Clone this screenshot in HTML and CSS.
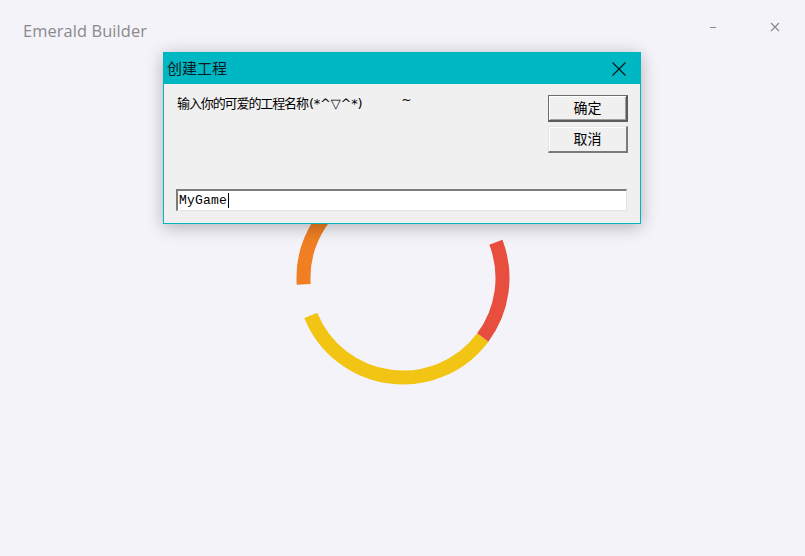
FILE: index.html
```html
<!DOCTYPE html>
<html lang="zh-CN">
<head>
<meta charset="utf-8">
<title>Emerald Builder</title>
<link rel="stylesheet" href="styles.css">
</head>
<body>
<div class="app">
  <header class="topbar">
    <div class="app-title">Emerald Builder</div>
    <div class="win-controls">
      <span class="win-btn min">
        <svg width="8" height="2" viewBox="0 0 8 2"><rect x="0" y="0" width="6" height="1" fill="#8a8a8a"/></svg>
      </span>
      <span class="win-btn close">
        <svg width="10" height="10" viewBox="0 0 10 10"><path d="M1 1 L9 9 M9 1 L1 9" stroke="#8a8a8a" stroke-width="1.2" fill="none"/></svg>
      </span>
    </div>
  </header>
  <main class="stage">
    <svg class="spinner" width="230" height="230" viewBox="0 0 230 230">
      <path d="M15.71 121.42 A99.5 99.5 0 0 1 80.97 21.50" stroke="#ef7f22" stroke-width="14" fill="none"/>
      <path d="M194.78 174.46 A99.5 99.5 0 0 1 22.75 152.27" stroke="#f2c413" stroke-width="14" fill="none"/>
      <path d="M207.89 79.34 A99.5 99.5 0 0 1 194.78 174.46" stroke="#e84e3e" stroke-width="14" fill="none"/>
    </svg>
  </main>

  <div class="dialog">
    <div class="dlg-titlebar">
      <span class="dlg-title">创建工程</span>
      <span class="dlg-close">
        <svg width="14" height="14" viewBox="0 0 14 14"><path d="M0.5 0.5 L13.5 13.5 M13.5 0.5 L0.5 13.5" stroke="#111" stroke-width="1.1" fill="none"/></svg>
      </span>
    </div>
    <div class="dlg-body">
      <div class="dlg-label"><span class="cjk">输入你的可爱的工程名称</span><span class="emo">(*^▽^*)</span><span class="tilde">~</span></div>
      <div class="dlg-buttons">
        <button class="btn btn-default">确定</button>
        <button class="btn">取消</button>
      </div>
      <div class="dlg-input"><span class="input-text">MyGame</span><span class="caret"></span></div>
    </div>
  </div>
</div>
</body>
</html>
```

FILE: styles.css
```css
html, body {
  margin: 0;
  padding: 0;
}
body {
  background: #f4f3f9;
  width: 805px;
  height: 556px;
  overflow: hidden;
  font-family: "Open Sans", "Noto Sans", sans-serif;
}
.app {
  position: relative;
  width: 805px;
  height: 556px;
  display: flex;
  flex-direction: column;
}
.topbar {
  height: 56px;
  display: flex;
  justify-content: space-between;
  align-items: flex-start;
}
.app-title {
  margin: 19px 0 0 23px;
  font-size: 16.4px;
  color: #8a8a8a;
  letter-spacing: 0.1px;
}
.win-controls {
  display: flex;
  margin-top: 21px;
  margin-right: 25px;
}
.win-btn {
  display: flex;
  align-items: center;
  justify-content: center;
  height: 12px;
}
.win-btn.min {
  width: 8px;
  margin-right: 52px;
  padding-top: 1px;
}
.win-btn.close {
  width: 10px;
}
.stage {
  flex: 1;
  display: flex;
  justify-content: center;
  align-items: flex-start;
  padding-top: 107px;
  padding-left: 1px;
}
.spinner {
  display: block;
}

.dialog {
  position: absolute;
  left: 163px;
  top: 52px;
  width: 476px;
  height: 170px;
  border: 1px solid #00b4c2;
  background: #f0f0f0;
  box-shadow: 0 3px 16px rgba(0, 0, 0, 0.28);
  display: flex;
  flex-direction: column;
  font-family: "Noto Sans CJK SC", "Noto Sans", sans-serif;
}
.dlg-titlebar {
  height: 31px;
  background: #00b8c4;
  display: flex;
  align-items: center;
  justify-content: space-between;
  padding: 0 14px 0 3px;
}
.dlg-title {
  font-size: 15px;
  color: #0c1a22;
  line-height: 31px;
  margin-top: -2px;
}
.dlg-close {
  display: flex;
}
.dlg-body {
  flex: 1;
  display: grid;
  grid-template-columns: 1fr 80px;
  grid-template-rows: 1fr auto;
  padding: 10px 12px 12px 12px;
  column-gap: 10px;
}
.dlg-label {
  font-size: 13px;
  color: #000;
  padding-left: 1px;
  line-height: 16px;
  margin-top: -2px;
  white-space: nowrap;
}
.cjk {
  letter-spacing: -1.1px;
}
.emo {
  margin-left: 1px;
  font-size: 13px;
  letter-spacing: -0.2px;
  font-family: "DejaVu Sans", "Noto Sans CJK SC", sans-serif;
}
.tilde {
  margin-left: 39px;
  font-size: 12px;
  font-family: "DejaVu Sans", sans-serif;
  vertical-align: 4px;
}
.dlg-buttons {
  display: flex;
  flex-direction: column;
  gap: 4px;
  padding-top: 1px;
}
.btn {
  width: 80px;
  height: 27px;
  margin: 0;
  padding: 0 0 2px 0;
  background: #f0f0f0;
  font-family: "Noto Sans CJK SC", sans-serif;
  font-size: 14px;
  color: #000;
  border-style: solid;
  border-width: 1px 2px 2px 1px;
  border-color: #e3e3e3 #7a7a7a #7a7a7a #e3e3e3;
  box-shadow: inset 1px 1px 0 #ffffff;
}
.btn-default {
  border-width: 1px 2px 2px 1px;
  border-color: #6d6d6d #5c5c5c #5c5c5c #6d6d6d;
  box-shadow: inset 1px 1px 0 #ffffff, inset -1px -1px 0 #a0a0a0;
}
.dlg-input {
  grid-column: 1 / 3;
  height: 19px;
  margin-right: 1px;
  background: #ffffff;
  border-style: solid;
  border-width: 2px 1px 1px 2px;
  border-color: #7c7c7c #e3e3e3 #e3e3e3 #7c7c7c;
  display: flex;
  align-items: center;
  padding-left: 1px;
}
.input-text {
  font-family: "Liberation Mono", "DejaVu Sans Mono", monospace;
  font-size: 13px;
  color: #000;
  letter-spacing: 0.2px;
}
.caret {
  width: 1px;
  height: 15px;
  background: #000;
  margin-left: 1px;
}
```
